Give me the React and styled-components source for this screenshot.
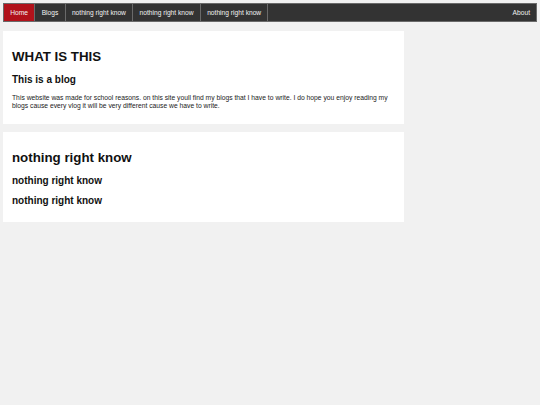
import React from 'react'
import styled, { createGlobalStyle } from 'styled-components'

const GlobalStyle = createGlobalStyle`
  html, body {
    margin: 0;
    padding: 0;
    background: #f1f1f1;
    font-family: "Liberation Sans", Arial, sans-serif;
  }
  body {
    padding: 3px;
  }
`

const TopNav = styled.nav`
  display: flex;
  background-color: #333;
  border: 1px solid #6a6a6a;
  height: 19px;
  box-sizing: border-box;
`

const NavLink = styled.a`
  display: flex;
  align-items: center;
  padding: 0 6.3px;
  font-size: 6.67px;
  color: #f2f2f2;
  text-decoration: none;
  border-right: 1px solid #6a6a6a;
  background-color: ${(p) => (p.$active ? '#b1121b' : 'transparent')};

  &.right {
    margin-left: auto;
    border-right: none;
    padding-right: 6px;
  }
`

const Row = styled.div`
  display: flex;
  margin-top: 9px;
`

const LeftColumn = styled.main`
  width: 75%;
  display: flex;
  flex-direction: column;
  gap: 8px;
`

const Card = styled.section`
  background-color: #fff;
  padding: 8px 9px 6px;
  color: #111;

  h2 {
    font-size: 13.3px;
    margin: 10px 0 9px;
  }
  h3 {
    font-size: 10px;
    margin: 9.5px 0;
  }
  p {
    font-size: 6.75px;
    line-height: 7.6px;
    margin: 8px 0 9px;
    color: #1a1a1a;
  }
`

const navItems = ['Blogs', 'nothing right know', 'nothing right know', 'nothing right know']

const App = () => {
  return (
    <>
      <GlobalStyle />
      <TopNav>
        <NavLink href="#" $active>Home</NavLink>
        {navItems.map((item, i) => (
          <NavLink href="#" key={i}>{item}</NavLink>
        ))}
        <NavLink href="#" className="right">About</NavLink>
      </TopNav>
      <Row>
        <LeftColumn>
          <Card>
            <h2>WHAT IS THIS</h2>
            <h3>This is a blog</h3>
            <p>
              This website was made for school reasons. on this site youll find my blogs that I have to write. I do hope you enjoy reading my blogs cause every vlog it will be very different cause we have to write.
            </p>
          </Card>
          <Card>
            <h2>nothing right know</h2>
            <h3>nothing right know</h3>
            <h3>nothing right know</h3>
          </Card>
        </LeftColumn>
      </Row>
    </>
  )
}

export default App
